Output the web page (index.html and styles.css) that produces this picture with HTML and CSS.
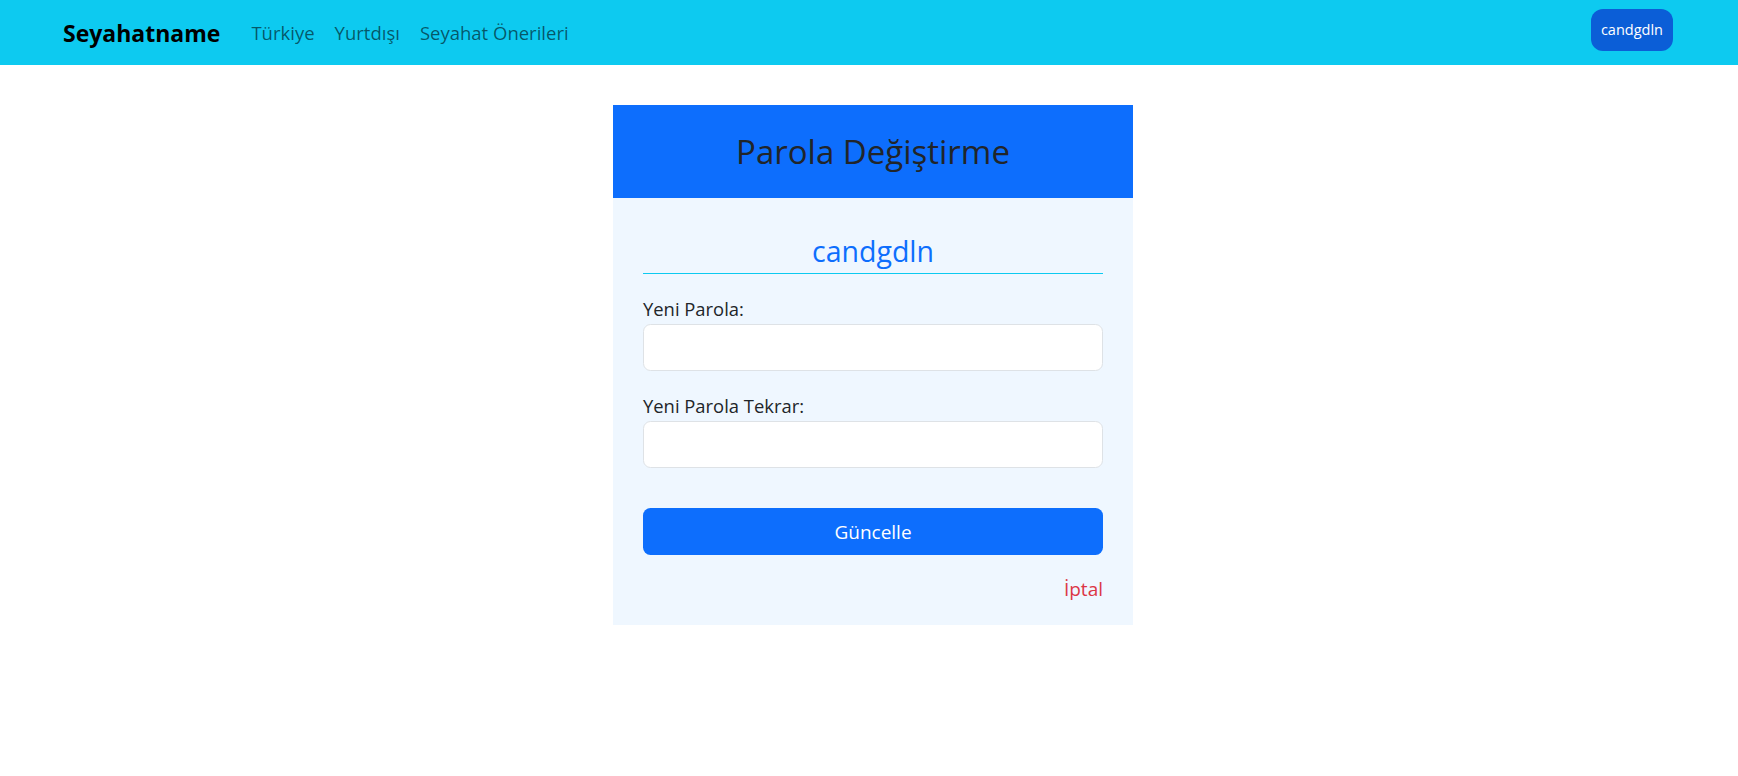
FILE: index.html
```html
<!DOCTYPE html>
<html lang="tr">
<head>
<meta charset="utf-8">
<title>Parola Değiştirme</title>
<link rel="stylesheet" href="styles.css">
</head>
<body>
<nav class="navbar">
  <a class="brand" href="#">Seyahatname</a>
  <ul class="nav-links">
    <li><a href="#">Türkiye</a></li>
    <li><a href="#">Yurtdışı</a></li>
    <li><a href="#">Seyahat Önerileri</a></li>
  </ul>
  <a class="user-btn" href="#">candgdln</a>
</nav>
<main class="page">
  <section class="card">
    <header class="card-header">
      <h2 class="card-title">Parola Değiştirme</h2>
    </header>
    <form class="card-body">
      <h4 class="username">candgdln</h4>
      <div class="field">
        <label class="label" for="p1">Yeni Parola:</label>
        <input class="input" id="p1" type="password">
      </div>
      <div class="field second">
        <label class="label" for="p2">Yeni Parola Tekrar:</label>
        <input class="input" id="p2" type="password">
      </div>
      <button class="submit" type="button">Güncelle</button>
      <div class="cancel-row"><a class="cancel" href="#">İptal</a></div>
    </form>
  </section>
</main>
</body>
</html>
```

FILE: styles.css
```css
* { box-sizing: border-box; }
html, body { margin: 0; padding: 0; }
body {
  font-family: "Open Sans", "Noto Sans", sans-serif;
  font-size: 19px;
  color: #212529;
  background: #ffffff;
}
a { text-decoration: none; }

.navbar {
  height: 65px;
  background: #0dcaf0;
  display: flex;
  align-items: center;
  padding: 0 65px 0 63px;
}
.brand {
  font-size: 23px;
  font-weight: 700;
  color: #000;
  margin-right: 31px;
  line-height: 36px;
}
.nav-links {
  list-style: none;
  margin: 0;
  padding: 0;
  display: flex;
  gap: 20px;
}
.nav-links a {
  font-size: 18.5px;
  color: rgba(0, 0, 0, 0.58);
  line-height: 30px;
}
.user-btn {
  margin-left: auto;
  align-self: flex-start;
  margin-top: 9px;
  background: #0b5ed7;
  color: #fff;
  font-size: 14.5px;
  line-height: 22px;
  height: 42px;
  padding: 10px 10px;
  border-radius: 12px;
  display: flex;
  align-items: center;
}

.page {
  display: flex;
  justify-content: center;
  padding-left: 8px;
  padding-top: 40px;
}
.card {
  width: 520px;
}
.card-header {
  background: #0d6efd;
  height: 93px;
  display: flex;
  align-items: center;
  justify-content: center;
}
.card-title {
  margin: 0;
  font-size: 33px;
  font-weight: 400;
  line-height: 42px;
  color: #212529;
}
.card-body {
  background: #eff7ff;
  padding: 35px 30px 21px;
  margin: 0;
}
.username {
  margin: 0;
  text-align: center;
  font-size: 28.5px;
  font-weight: 400;
  line-height: 36px;
  color: #0d6efd;
  padding-bottom: 4px;
  border-bottom: 1px solid #0dcaf0;
}
.field {
  margin-top: 20px;
}
.label {
  display: block;
  line-height: 30px;
  font-size: 18.4px;
}
.input {
  display: block;
  width: 100%;
  height: 47px;
  border: 1px solid #dee2e6;
  border-radius: 7.5px;
  background: #fff;
  font: inherit;
}
.submit {
  display: block;
  margin-top: 40px;
  width: 100%;
  height: 47px;
  border: none;
  border-radius: 7.5px;
  background: #0d6efd;
  color: #fff;
  font-family: inherit;
  font-size: 19px;
}
.cancel-row {
  margin-top: 19px;
  text-align: right;
  line-height: 30px;
}
.cancel {
  color: #dc3545;
  font-size: 19px;
}
```
